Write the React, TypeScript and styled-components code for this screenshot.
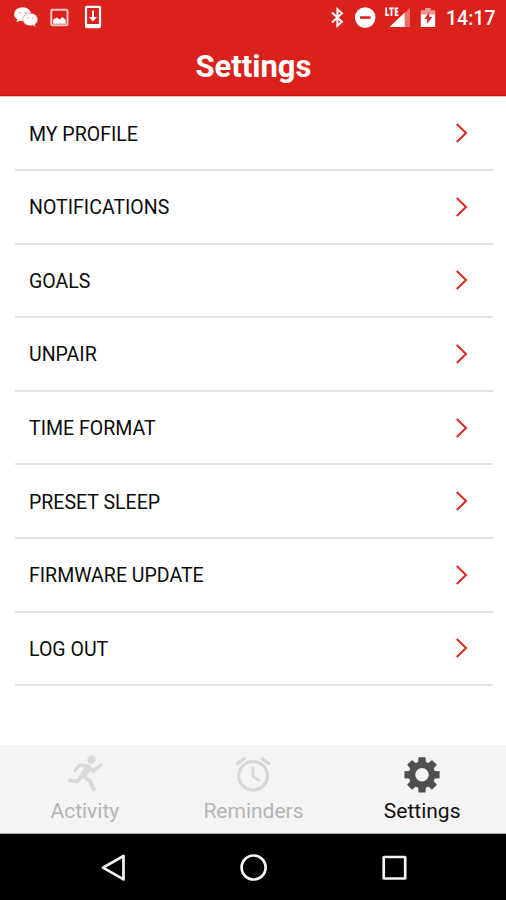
import React from "react";
import styled, { createGlobalStyle } from "styled-components";

const GlobalStyle = createGlobalStyle`
  * { box-sizing: border-box; }
  body { margin: 0; background: #fff; }
`;

const Screen = styled.div`
  width: 506px;
  height: 900px;
  display: flex;
  flex-direction: column;
  overflow: hidden;
  background: #fff;
  color: #0c0c0c;
  font-family: Roboto, "Liberation Sans", sans-serif;
`;

const Header = styled.header`
  height: 96px;
  flex: none;
  display: flex;
  flex-direction: column;
  background: #db211c;
  border-bottom: 1px solid #d0100c;
  color: #fff;
`;

const StatusBar = styled.div`
  height: 36px;
  flex: none;
  display: flex;
  align-items: flex-start;
  justify-content: space-between;
  padding: 0 10px 0 13px;
`;

const StatusGroup = styled.div`
  display: flex;
`;

const StatusIcon = styled.svg<{ $gap?: number }>`
  display: block;
  height: 36px;
  margin-right: ${(p) => p.$gap ?? 0}px;
`;

const Clock = styled.time`
  width: 50px;
  font-size: 19.5px;
  font-weight: 500;
  line-height: 37px;
  white-space: nowrap;
`;

const Title = styled.h1`
  margin: 0;
  padding-left: 1px;
  font-size: 31px;
  font-weight: 700;
  line-height: 62px;
  text-align: center;
`;

const Menu = styled.ul`
  flex: 1;
  margin: 0;
  padding: 0.4px 13.5px 0 14.5px;
  list-style: none;
  border-top: 1px solid #f5b9b7;
`;

const MenuRow = styled.li`
  height: 73.6px;
  display: flex;
  align-items: center;
  justify-content: space-between;
  padding: 3px 24.5px 0 14.5px;
  border-bottom: 2px solid #e3e3e3;
`;

const MenuLabel = styled.span`
  font-size: 19.55px;
  line-height: 24px;
`;

const Chevron = styled.svg`
  display: block;
  width: 13px;
  height: 22px;
  margin-bottom: 3px;
`;

const TabBar = styled.nav`
  height: 89px;
  flex: none;
  display: grid;
  grid-template-columns: repeat(3, 1fr);
  background: #f4f4f4;
  border-bottom: 1px solid #a8a8a8;
`;

const Tab = styled.div<{ $active?: boolean }>`
  display: flex;
  flex-direction: column;
  align-items: center;
  padding: 10px 0 0 1px;
  color: ${(p) => (p.$active ? "#111" : "#b4b4b4")};
  font-size: 21px;
  line-height: 26px;
`;

const TabIcon = styled.svg`
  display: block;
  width: 40px;
  height: 40px;
  margin-bottom: 3px;
`;

const NavBar = styled.footer`
  height: 66px;
  flex: none;
  display: flex;
  align-items: center;
  justify-content: space-between;
  padding: 0 98px 0 100px;
  background: #000;
`;

const NavIcon = styled.svg`
  display: block;
  width: 28px;
  height: 30px;
`;

const items = [
  "MY PROFILE",
  "NOTIFICATIONS",
  "GOALS",
  "UNPAIR",
  "TIME FORMAT",
  "PRESET SLEEP",
  "FIRMWARE UPDATE",
  "LOG OUT",
];

const teeth = [0, 45, 90, 135, 180, 225, 270, 315];

export default function App() {
  return (
    <>
      <GlobalStyle />
      <Screen>
        <Header>
          <StatusBar>
            <StatusGroup>
              <StatusIcon width="25" viewBox="13 0 25 36" $gap={12}>
                <path fill="#fff" d="M22.6 7.2c-4.8 0-8.4 3.1-8.4 7 0 2.3 1.2 4.1 3.1 5.4l-.8 2.7 3-1.5c1 .3 2 .4 3.1.4 4.7 0 8.4-3 8.4-7s-3.7-7-8.4-7z" />
                <path fill="#fff" stroke="#e24540" strokeWidth=".5" d="M30.3 13.2c-4.2 0-7.4 2.8-7.4 6.3s3.2 6.2 7.4 6.2c.9 0 1.8-.1 2.5-.4l2.8 1.6-.7-2.5c1.7-1.2 2.8-2.9 2.8-4.9 0-3.5-3.3-6.3-7.4-6.3z" />
                <g fill="#f09a97">
                  <circle cx="19.7" cy="12.7" r=".9" />
                  <circle cx="25.6" cy="12.7" r=".9" />
                  <circle cx="27.9" cy="18" r=".7" />
                  <circle cx="32.7" cy="18" r=".7" />
                </g>
              </StatusIcon>
              <StatusIcon width="19" viewBox="50 0 19 36" $gap={15}>
                <rect x="51.3" y="9.7" width="16.2" height="15.6" rx="1" fill="none" stroke="#f8c6c4" strokeWidth="2" />
                <path fill="#fff" d="M53 23.8v-4l3.8-2.4 2.9 2 2.8-2.3 3.3 3v3.7z" />
              </StatusIcon>
              <StatusIcon width="18" viewBox="84 0 18 36">
                <rect x="86" y="6.8" width="14" height="20.4" rx="1" fill="none" stroke="#fff" strokeWidth="2.2" />
                <path fill="#fff" d="M86 24h14v3.5H86zM92 10.5h2v6.5h3l-4 4.500-4-4.500h3z" />
              </StatusIcon>
            </StatusGroup>
            <StatusGroup>
              <StatusIcon width="15" viewBox="331 0 15 36" $gap={10}>
                <path fill="none" stroke="#fff" strokeWidth="2" d="M334 12.5l9.9 9.2-4.500 4V9.300l4.500 4-9.900 9.200" />
              </StatusIcon>
              <StatusIcon width="22" viewBox="355 0 22 36" $gap={8}>
                <circle cx="366.200" cy="17.600" r="10.300" fill="#fff" />
                <path fill="#db211c" d="M361 16.300h10.600v2.500H361z" />
              </StatusIcon>
              <StatusIcon width="26" viewBox="384 0 26 36" $gap={9}>
                <path fill="#e8716d" d="M404.500 13.300l5.600-5.600V27h-5.600z" />
                <path fill="#fff" d="M389.500 27L404.700 12.500V27z" />
                <path fill="none" stroke="#fff" strokeWidth="1.800" d="M386.200 7.500v7.700h3M389 8.400h5M391.500 8v8M398.300 8.400h-2.600v6.800h2.800M395.700 11.700h2.500" />
              </StatusIcon>
              <StatusIcon width="17" viewBox="419.500 0 17 36" $gap={10}>
                <path fill="#ef9692" d="M421.300 10.200h4.200V8h5.800v2.200h4.400V15h-14.400z" />
                <path fill="#fff" d="M421.300 14.500h14.400V27h-14.400z" />
                <path fill="#db211c" d="M429.700 12.500l-4.900 6.300h2.900v4.900l5.100-6.600h-3.100z" />
              </StatusIcon>
              <Clock>14:17</Clock>
            </StatusGroup>
          </StatusBar>
          <Title>Settings</Title>
        </Header>

        <Menu>
          {items.map((item) => (
            <MenuRow key={item}>
              <MenuLabel>{item}</MenuLabel>
              <Chevron viewBox="0 0 13 22">
                <path d="M1.800 2l9.200 9-9.200 9" fill="none" stroke="#dd2823" strokeWidth="2" />
              </Chevron>
            </MenuRow>
          ))}
        </Menu>

        <TabBar>
          <Tab>
            <TabIcon viewBox="65 755 40 40">
              <circle cx="91.500" cy="759.700" r="4.200" fill="#dadada" />
              <g fill="none" stroke="#dadada" strokeLinecap="round" strokeLinejoin="round">
                <path strokeWidth="3.400" d="M75 770.500l4.500-5.300 8.500.8 5 5.200 8-6.400" />
                <path strokeWidth="7" d="M87.500 768.500l-4 6.500" />
                <path strokeWidth="4" d="M82 776l-4.500 5.300-7.500-.8M84 776.500l6.300 5 3.400 7.700" />
              </g>
            </TabIcon>
            Activity
          </Tab>
          <Tab>
            <TabIcon viewBox="233.500 755 40 40">
              <g fill="none" stroke="#d8d8d8" strokeWidth="3.200">
                <circle cx="253.600" cy="775.800" r="14.300" />
                <path d="M253.300 767v9.500l7 4.300" strokeWidth="2.600" />
                <path d="M237 764.500l8.500-6.800M270.300 764.500l-8.500-6.800" />
              </g>
            </TabIcon>
            Reminders
          </Tab>
          <Tab $active>
            <TabIcon viewBox="402.500 755 40 40">
              <g fill="#505050">
                {teeth.map((angle) => (
                  <path key={angle} d="M418.500 765l.5-7.800h7l.5 7.800z" transform={`rotate(${angle} 422.500 774.800)`} />
                ))}
              </g>
              <circle cx="422.500" cy="774.800" r="10" fill="none" stroke="#505050" strokeWidth="6.500" />
            </TabIcon>
            Settings
          </Tab>
        </TabBar>

        <NavBar>
          <NavIcon viewBox="100 851 28 30">
            <path d="M103 866.700l20.500-11.700v23.400z" fill="none" stroke="#f4f4f4" strokeWidth="2.700" strokeLinejoin="round" />
          </NavIcon>
          <NavIcon viewBox="240 851 28 30">
            <circle cx="253.600" cy="866.500" r="12" fill="none" stroke="#f4f4f4" strokeWidth="2.700" />
          </NavIcon>
          <NavIcon viewBox="380 851 28 30">
            <rect x="383.700" y="856" width="21.500" height="21.500" rx=".5" fill="none" stroke="#f4f4f4" strokeWidth="2.700" />
          </NavIcon>
        </NavBar>
      </Screen>
    </>
  );
}
